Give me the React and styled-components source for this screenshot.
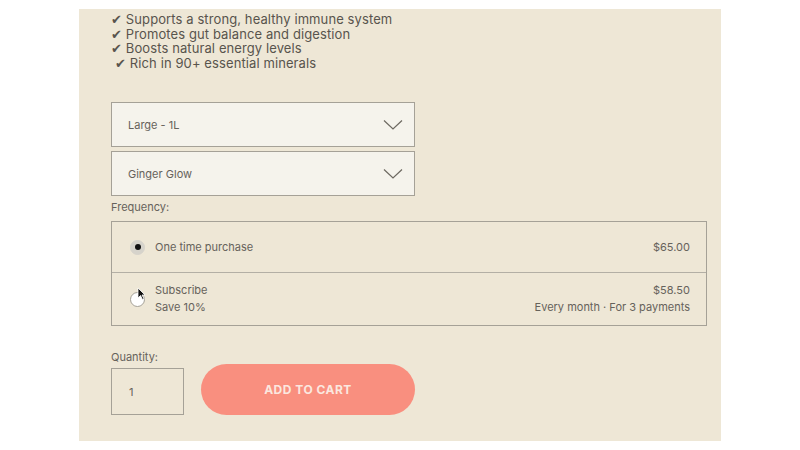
import React from "react";
import styled, { createGlobalStyle } from "styled-components";

const Global = createGlobalStyle`
  body {
    margin: 0;
    background: #ffffff;
    font-family: "Inter", "Noto Sans", sans-serif;
  }
`;

const Panel = styled.div`
  margin: 9px 0 0 79px;
  width: 642px;
  height: 432px;
  box-sizing: border-box;
  padding: 3px 15px 0 32px;
  background: #eee7d6;
  color: #5b5750;
`;

const Features = styled.ul`
  list-style: none;
  margin: 0 0 32px;
  padding: 0;
  font-size: 13px;
  line-height: 14.6px;
  letter-spacing: 0.1px;
  color: #58544d;
`;

const Feature = styled.li`
  padding-left: ${(p) => (p.$indent ? "4px" : "0")};
`;

const Select = styled.div`
  width: 304px;
  height: 45px;
  box-sizing: border-box;
  border: 1px solid #a5a197;
  background: #f5f3ec;
  display: flex;
  align-items: center;
  justify-content: space-between;
  padding: 0 11px 0 16px;
  font-size: 11px;
  color: #66625b;
  margin-bottom: 4px;
`;

const Label = styled.div`
  font-size: 11px;
  color: #66625b;
  margin: ${(p) => p.$m || "0"};
  line-height: 14px;
`;

const Options = styled.div`
  width: 596px;
  box-sizing: border-box;
  border: 1px solid #a5a197;
  font-size: 11px;
  color: #66625b;
`;

const Option = styled.div`
  display: flex;
  align-items: center;
  height: ${(p) => p.$h}px;
  padding: 0 16px 0 18px;
  border-top: ${(p) => (p.$divided ? "1px solid #b3afa5" : "none")};
  position: relative;
`;

const Radio = styled.span`
  width: 15px;
  height: 15px;
  border-radius: 50%;
  box-sizing: border-box;
  background: ${(p) => (p.$on ? "#d6d3cb" : "#ffffff")};
  border: 1px solid ${(p) => (p.$on ? "#d6d3cb" : "#a5a197")};
  display: flex;
  align-items: center;
  justify-content: center;
  margin-right: 10px;
  flex-shrink: 0;
  &::after {
    content: "";
    display: ${(p) => (p.$on ? "block" : "none")};
    width: 6px;
    height: 6px;
    border-radius: 50%;
    background: #111;
  }
`;

const Stack = styled.div`
  display: flex;
  flex-direction: column;
  gap: 4px;
  line-height: 13px;
  align-items: ${(p) => (p.$right ? "flex-end" : "flex-start")};
`;

const Spacer = styled.div`
  flex: 1;
`;

const Cursor = styled.svg`
  position: absolute;
  left: 25px;
  top: 14px;
`;

const BuyRow = styled.div`
  display: flex;
  align-items: flex-end;
  gap: 17px;
`;

const Qty = styled.div`
  width: 73px;
  height: 47px;
  box-sizing: border-box;
  border: 1px solid #a5a197;
  display: flex;
  align-items: center;
  padding-left: 17px;
  font-size: 11px;
  color: #66625b;
`;

const Cart = styled.button`
  width: 214px;
  height: 51px;
  border: none;
  border-radius: 26px;
  background: #f98f7f;
  color: #fbe7df;
  font-family: "Inter", "Noto Sans", sans-serif;
  font-weight: 700;
  font-size: 12px;
  letter-spacing: 0.5px;
`;

const Chevron = () => (
  <svg width="20" height="12" viewBox="0 0 20 12">
    <path d="M1 1.5 L10 10 L19 1.5" fill="none" stroke="#6d6961" strokeWidth="1.2" />
  </svg>
);

export default function App() {
  return (
    <>
      <Global />
      <Panel>
        <Features>
          <Feature>✔ Supports a strong, healthy immune system</Feature>
          <Feature>✔ Promotes gut balance and digestion</Feature>
          <Feature>✔ Boosts natural energy levels</Feature>
          <Feature $indent>✔ Rich in 90+ essential minerals</Feature>
        </Features>
        <Select>
          <span>Large - 1L</span>
          <Chevron />
        </Select>
        <Select>
          <span>Ginger Glow</span>
          <Chevron />
        </Select>
        <Label $m="1px 0 7px">Frequency:</Label>
        <Options>
          <Option $h={50}>
            <Radio $on />
            <span>One time purchase</span>
            <Spacer />
            <span>$65.00</span>
          </Option>
          <Option $h={52} $divided>
            <Radio />
            <Stack>
              <span>Subscribe</span>
              <span>Save 10%</span>
            </Stack>
            <Spacer />
            <Stack $right>
              <span>$58.50</span>
              <span>Every month · For 3 payments</span>
            </Stack>
            <Cursor width="9" height="14" viewBox="0 0 9 14">
              <path d="M1 1 L1 11 L3.5 8.5 L5.5 12.5 L7 11.8 L5 8 L8 8 Z" fill="#111" stroke="#fff" strokeWidth="0.8" />
            </Cursor>
          </Option>
        </Options>
        <Label $m="24px 0 0">Quantity:</Label>
        <BuyRow>
          <Qty>1</Qty>
          <Cart>ADD TO CART</Cart>
        </BuyRow>
      </Panel>
    </>
  );
}
